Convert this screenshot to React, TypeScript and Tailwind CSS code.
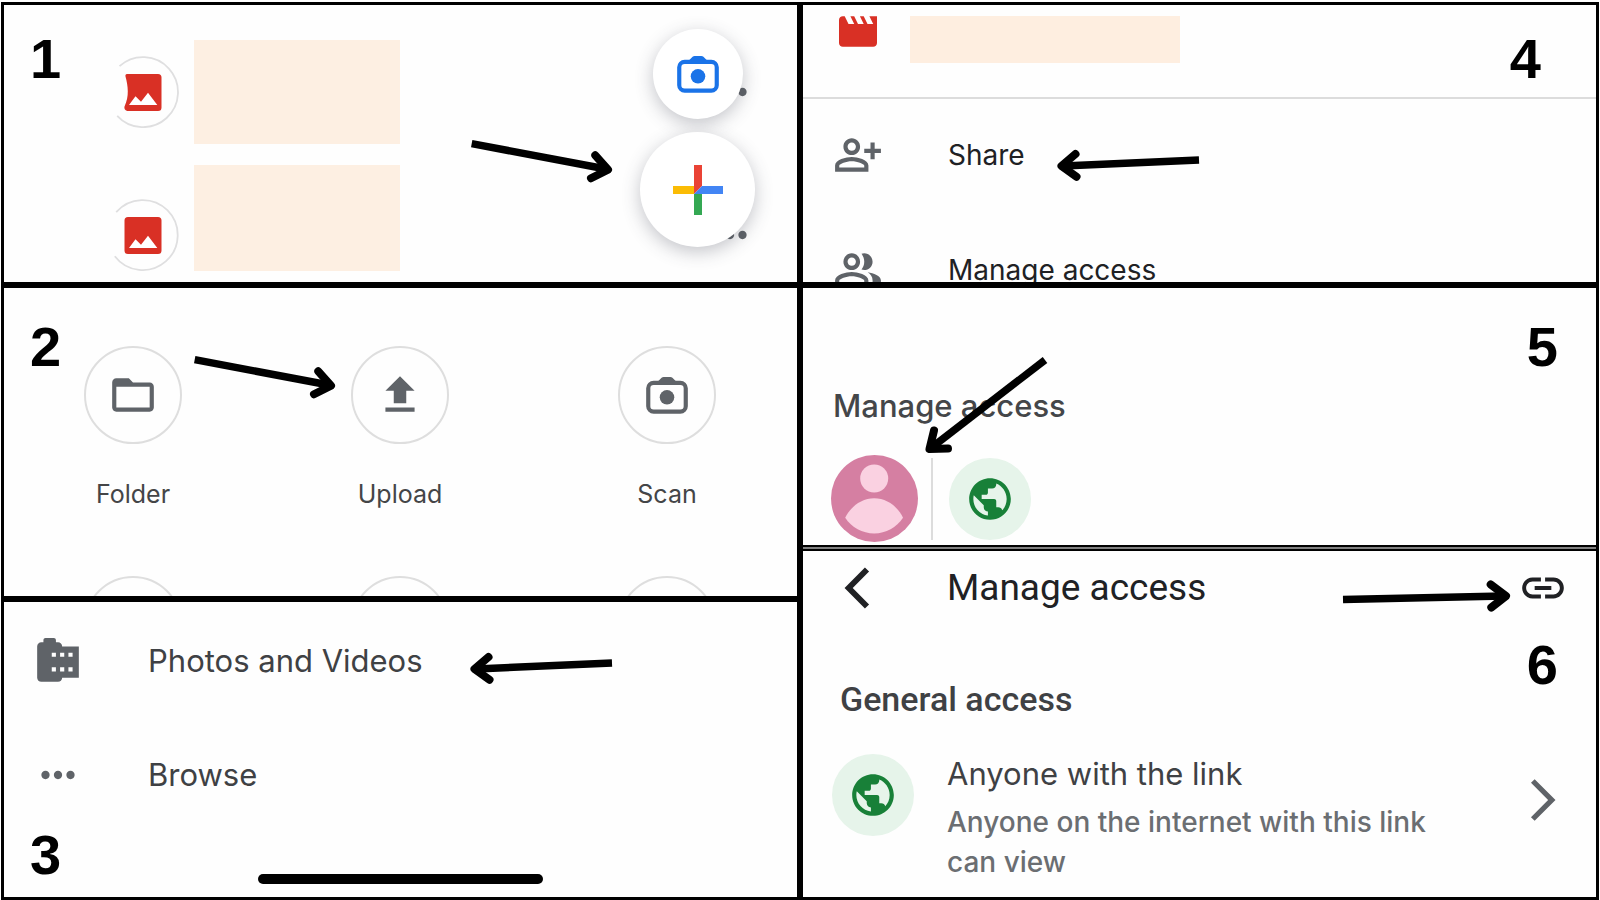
import type { ReactNode } from "react";
import clsx from "clsx";
import {
  MdArrowForwardIos,
  MdFolderOpen,
  MdLink,
  MdMoreHoriz,
  MdPublic,
  MdUpload,
} from "react-icons/md";

const PERSON_PATH =
  "M9 12c2.21 0 4-1.79 4-4s-1.79-4-4-4-4 1.79-4 4 1.79 4 4 4zm0-6c1.1 0 2 .9 2 2s-.9 2-2 2-2-.9-2-2 .9-2 2-2zM9 13c-2.67 0-8 1.34-8 4v3h16v-3c0-2.66-5.33-4-8-4zm6 5H3v-1c.22-.72 3.31-2 6-2s5.8 1.29 6 2v1z";

function PersonAddIcon() {
  return (
    <svg viewBox="0 0 24 24" className="size-[50px] shrink-0" fill="currentColor" aria-hidden>
      <path d={PERSON_PATH} />
      <path d="M20 9V6h-2v3h-3v2h3v3h2v-3h3V9z" />
    </svg>
  );
}

function PeopleIcon() {
  return (
    <svg viewBox="0 0 24 24" className="size-[50px] shrink-0" fill="currentColor" aria-hidden>
      <path d={PERSON_PATH} />
      <path d="M16.67 13.13C18.04 14.06 19 15.32 19 17v3h4v-3c0-2.18-3.57-3.47-6.33-3.87zM15 12c2.21 0 4-1.79 4-4s-1.79-4-4-4c-.47 0-.91.1-1.33.24C14.5 5.27 15 6.58 15 8s-.5 2.73-1.33 3.76c.42.14.86.24 1.33.24z" />
    </svg>
  );
}

function CameraIcon() {
  return (
    <svg viewBox="0 0 24 24" className="size-[50px]" fill="currentColor" aria-hidden>
      <rect x="3" y="6.2" width="18" height="13.8" rx="2.6" fill="none" stroke="currentColor" strokeWidth="2" />
      <path d="M7.6 5.5 9.4 3.7q.4-.4 1-.4h3.2q.6 0 1 .4l1.8 1.8z" />
      <circle cx="12" cy="13.1" r="3.5" />
    </svg>
  );
}

function FilmRollIcon() {
  return (
    <svg viewBox="0 0 24 24" className="size-[50px] shrink-0" fill="currentColor" aria-hidden>
      <path
        fillRule="evenodd"
        d="M14 5c0-1.100-.9-2-2-2h-1V2c0-.55-.45-1-1-1H6c-.55 0-1 .45-1 1v1H4c-1.100 0-2 .9-2 2v15c0 1.100.9 2 2 2h8c1.100 0 2-.9 2-2h8V5zM9 8h2v2H9zM13 8h2v2h-2zM17 8h2v2h-2zM9 15h2v2H9zM13 15h2v2h-2zM17 15h2v2h-2z"
      />
    </svg>
  );
}

function MovieIcon() {
  return (
    <svg viewBox="2 4 20 16" className="h-[31px] w-[38px] shrink-0" fill="#d93025" aria-hidden>
      <path d="M18 4l2 4h-3l-2-4h-2l2 4h-3l-2-4H8l2 4H7L5 4H4c-1.1 0-2 .9-2 2v12c0 1.1.9 2 2 2h16c1.1 0 2-.9 2-2V4z" />
    </svg>
  );
}

function BackIcon() {
  return (
    <svg viewBox="0 0 24 24" className="size-[50px]" aria-hidden>
      <path d="M16.8 3.100 8 12l8.800 8.900" fill="none" stroke="currentColor" strokeWidth="2.800" />
    </svg>
  );
}

// Both thumbnails share the mountains; only the ring and the left edge differ.
function ImageThumb({ notched = false }: { notched?: boolean }) {
  return (
    <svg viewBox="0 0 72 72" className="size-[72px] shrink-0" aria-hidden>
      <path
        d={notched ? "M12.5 10.2A35 35 0 1 1 10.2 59.8" : "M9.2 13.2A35 35 0 1 1 7.8 57.2"}
        fill="none"
        stroke="#dfdfe0"
        strokeWidth="1.8"
      />
      <path
        d={
          notched
            ? "M20 18h31a3.500 3.500 0 0 1 3.500 3.500v30a3.500 3.500 0 0 1-3.500 3.500h-30.500a3.500 3.500 0 0 1-3-4.500C22.500 40 21 30 18.500 20.500Q18 18 20 18z"
            : "M21 18h30a3.500 3.500 0 0 1 3.500 3.500v30a3.500 3.500 0 0 1-3.500 3.500H21a3.500 3.500 0 0 1-3.500-3.500v-30A3.500 3.500 0 0 1 21 18z"
        }
        fill="#d93025"
      />
      <path d="M22 49l6.500-8.700 5.500 5.400 7-9L50.300 49z" fill="#fff" />
    </svg>
  );
}

function PlusIcon() {
  return (
    <svg viewBox="0 0 50 50" className="size-[50px]" aria-hidden>
      <path d="M21 0h8v21l-8 8z" fill="#ea4335" />
      <path d="M0 21h21v8H0z" fill="#fbbc04" />
      <path d="M21 29h8v21h-8z" fill="#34a853" />
      <path d="M29 21h21v8H21z" fill="#4285f4" />
    </svg>
  );
}

function Avatar() {
  return (
    <svg viewBox="0 0 87 87" className="size-[87px] shrink-0" role="img" aria-label="Owner">
      <circle cx="43.500" cy="43.500" r="43.500" fill="#d57fa2" />
      <circle cx="43.200" cy="23.500" r="14" fill="#fad1e1" />
      <path
        d="M14.200 62.800C20 51 31 43.200 43.200 43.200S66.500 51 72 62.800C65.500 72.500 55 78.500 43.200 78.500S20.500 72.500 14.200 62.800z"
        fill="#fad1e1"
      />
    </svg>
  );
}

type ArrowProps = {
  width: number;
  height: number;
  shaft: string;
  head: string;
  className?: string;
};

function Arrow({ width, height, shaft, head, className }: ArrowProps) {
  return (
    <svg
      width={width}
      height={height}
      viewBox={`0 0 ${width} ${height}`}
      className={clsx("pointer-events-none shrink-0 overflow-visible", className)}
      fill="none"
      stroke="#000"
      strokeWidth="7.500"
      aria-hidden
    >
      <path d={shaft} />
      <path d={head} strokeWidth="8" strokeLinecap="round" strokeLinejoin="round" />
    </svg>
  );
}

const ARROW_DOWN_RIGHT = {
  width: 148,
  height: 48,
  shaft: "M3.700 3.600 138 29",
  head: "M127.300 15.300 140 29.700 123 38.300",
};

const ARROW_LEFT = {
  width: 142,
  height: 31,
  shaft: "M142 11 6 17",
  head: "M18.500 5 4.500 17 19.500 27.700",
};

const ARROW_DOWN_LEFT = {
  width: 125,
  height: 103,
  shaft: "M121 6 7 94",
  head: "M10 76.500 5.500 95 24 94.500",
};

const ARROW_RIGHT = {
  width: 168,
  height: 32,
  shaft: "M0 18.500 161 15",
  head: "M147.700 3.500 163 15 148.300 26.500",
};

function Panel({ children, className }: { children: ReactNode; className?: string }) {
  return (
    <section className={clsx("relative overflow-hidden bg-[#fefefe]", className)}>
      {children}
    </section>
  );
}

function StepNumber({ n, className }: { n: number; className: string }) {
  return (
    <span
      className={clsx(
        "absolute font-['Liberation_Sans',sans-serif] text-[56px] leading-none font-bold text-black",
        className,
      )}
    >
      {n}
    </span>
  );
}

function GlobeBadge() {
  return (
    <span className="flex size-[82px] shrink-0 items-center justify-center rounded-full bg-[#e6f4ea] text-[#188038]">
      <MdPublic size={50} aria-hidden />
    </span>
  );
}

const CREATE_ACTIONS = [
  { label: "Folder", icon: <MdFolderOpen size={50} aria-hidden /> },
  { label: "Upload", icon: <MdUpload size={50} aria-hidden /> },
  { label: "Scan", icon: <CameraIcon /> },
];

function FilesPanel() {
  return (
    <Panel className="flex flex-col gap-[21px] pt-[35px] pr-[42px] pb-[11px] pl-[103px]">
      <div className="flex items-center gap-[15px]">
        <ImageThumb notched />
        <div className="h-[104px] w-[206px] bg-[#fdefe2]" />
        <button type="button" className="ml-auto text-[#5f6368]" aria-label="More actions">
          <MdMoreHoriz size={50} />
        </button>
      </div>
      <div className="flex items-end gap-[15px]">
        <ImageThumb />
        <div className="h-[106px] w-[206px] bg-[#fdefe2]" />
        <button
          type="button"
          className="ml-auto flex h-[72px] items-center text-[#5f6368]"
          aria-label="More actions"
        >
          <MdMoreHoriz size={50} />
        </button>
      </div>

      <div className="absolute top-6 right-[42px] flex flex-col items-center gap-[13px]">
        <button
          type="button"
          className="flex size-[90px] items-center justify-center rounded-full bg-white text-[#1a73e8] shadow-[0_5px_18px_rgba(60,64,80,0.3)]"
          aria-label="Scan"
        >
          <CameraIcon />
        </button>
        <button
          type="button"
          className="flex size-[115px] items-center justify-center rounded-full bg-white shadow-[0_5px_18px_rgba(60,64,80,0.3)]"
          aria-label="New"
        >
          <PlusIcon />
        </button>
      </div>

      <Arrow {...ARROW_DOWN_RIGHT} className="absolute top-[135px] left-[464px]" />
      <StepNumber n={1} className="top-[26px] left-[26px]" />
    </Panel>
  );
}

function CreatePanel() {
  return (
    <Panel className="pt-[58px] pr-[81px] pl-20">
      <div className="flex justify-between">
        {CREATE_ACTIONS.map((a) => (
          <button
            key={a.label}
            type="button"
            className="flex w-[98px] flex-col items-center gap-[34px] font-['Inter',sans-serif] text-[25px] leading-8 text-[#444547]"
          >
            <span className="flex size-[98px] items-center justify-center rounded-full border-2 border-[#dedede] text-[#5f6368]">
              {a.icon}
            </span>
            {a.label}
          </button>
        ))}
      </div>
      {/* next row of actions, cut off by the fold */}
      <div className="mt-[66px] flex h-5 justify-between overflow-hidden">
        {CREATE_ACTIONS.map((a) => (
          <span key={a.label} className="size-[98px] rounded-full border-2 border-[#dedede]" />
        ))}
      </div>
      <Arrow {...ARROW_DOWN_RIGHT} className="absolute top-[68px] left-[187px]" />
      <StepNumber n={2} className="top-[31px] left-[26px]" />
    </Panel>
  );
}

function UploadPanel() {
  return (
    <Panel className="pt-[34px] pb-[13px] pl-[29px] font-['Inter',sans-serif] text-[31px] leading-10 text-[#3f4144]">
      <div className="flex items-center">
        <button type="button" className="flex items-center gap-[65px]">
          <span className="text-[#5f6368]">
            <FilmRollIcon />
          </span>
          Photos and Videos
        </button>
        <Arrow {...ARROW_LEFT} className="mb-[3px] ml-[47px] self-end" />
      </div>
      <button type="button" className="mt-16 flex items-center gap-[65px]">
        <MdMoreHoriz size={50} className="text-[#5f6368]" aria-hidden />
        Browse
      </button>
      <div className="mt-[74px] -ml-[29px] flex justify-center">
        <span className="h-[10px] w-[285px] rounded-full bg-black" />
      </div>
      <StepNumber n={3} className="bottom-[14px] left-[26px]" />
    </Panel>
  );
}

function SharePanel() {
  return (
    <Panel className="mb-[6px] font-['Inter',sans-serif] text-[28px] leading-10 text-[#202124]">
      <div className="flex items-start gap-[33px] border-b-2 border-[#dcdcdc] pt-[11px] pb-[34px] pl-9">
        <MovieIcon />
        <div className="h-[47px] w-[270px] bg-[#feeee0]" />
      </div>
      <div className="mt-[31px] flex items-center pl-[30px]">
        <button type="button" className="flex items-center gap-[65px]">
          <span className="text-[#5f6368]">
            <PersonAddIcon />
          </span>
          Share
        </button>
        <Arrow {...ARROW_LEFT} className="ml-[32px] self-end" />
      </div>
      {/* the sheet is scrolled, so this item only peeks in */}
      <div className="mt-[65px] h-[37px] overflow-hidden pl-[30px]">
        <button type="button" className="flex items-center gap-[65px]">
          <span className="text-[#5f6368]">
            <PeopleIcon />
          </span>
          Manage access
        </button>
      </div>
      <StepNumber n={4} className="top-[26px] right-[55px]" />
    </Panel>
  );
}

function PeoplePanel() {
  return (
    <Panel className="pt-[98px] pb-[3px] pl-7">
      <h2 className="ml-[2px] font-['Inter',sans-serif] text-[31px] leading-10 font-medium text-[#444649]">
        Manage access
      </h2>
      <div className="mt-[29px] flex items-center">
        <Avatar />
        <span className="mr-4 ml-[13px] h-[82px] w-[2px] bg-[#dcdcdc]" />
        <GlobeBadge />
      </div>
      <Arrow {...ARROW_DOWN_LEFT} className="absolute top-[66px] left-[121px]" />
      <StepNumber n={5} className="top-[31px] right-[38px]" />
    </Panel>
  );
}

function AccessPanel() {
  return (
    <Panel className="pt-3 pr-7 pb-[15px] pl-[29px]">
      <header className="flex items-center text-[#202124]">
        <button type="button" aria-label="Back">
          <BackIcon />
        </button>
        <h1 className="ml-[65px] font-['Roboto',sans-serif] text-[37px] leading-10">
          Manage access
        </h1>
        <Arrow {...ARROW_RIGHT} className="ml-auto self-end" />
        <button type="button" className="ml-[7px]" aria-label="Copy link">
          <MdLink size={50} />
        </button>
      </header>
      <h2 className="mt-[66px] ml-2 font-['Roboto',sans-serif] text-[34px] leading-10 font-medium text-[#3f4144]">
        General access
      </h2>
      <button
        type="button"
        className="mt-[35px] flex w-full items-start text-left font-['Inter',sans-serif]"
      >
        <GlobeBadge />
        <span className="ml-[33px] flex-1 pr-12">
          <span className="block text-[31px] leading-10 text-[#3f4144]">Anyone with the link</span>
          <span className="mt-2 block text-[28px] leading-10 font-medium text-[#6b6e72]">
            Anyone on the internet with this link can view
          </span>
        </span>
        <MdArrowForwardIos size={50} className="mt-[21px] text-[#5f6368]" aria-hidden />
      </button>
      <StepNumber n={6} className="top-[86px] right-[38px]" />
    </Panel>
  );
}

export default function App() {
  return (
    <main className="bg-white px-px pt-[2px]">
      <div className="grid grid-cols-2 gap-[6px] bg-black p-[3px]">
        <div className="flex flex-col gap-[6px]">
          <FilesPanel />
          <CreatePanel />
          <UploadPanel />
        </div>
        <div className="flex flex-col">
          <SharePanel />
          <PeoplePanel />
          <div className="my-[2px] h-[2px] bg-[#808080]" />
          <AccessPanel />
        </div>
      </div>
    </main>
  );
}
